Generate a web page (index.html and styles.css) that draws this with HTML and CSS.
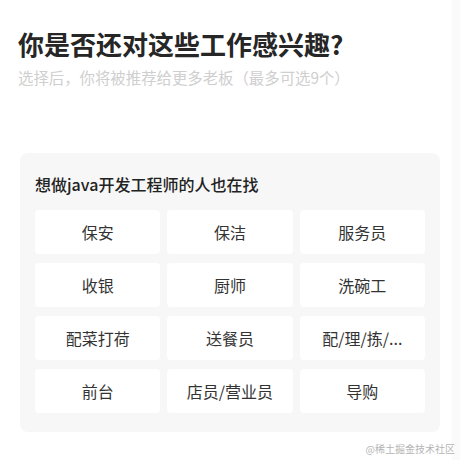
FILE: index.html
```html
<!DOCTYPE html>
<html lang="zh-CN">
  <head>
    <meta charset="UTF-8" />
    <meta name="viewport" content="width=device-width, initial-scale=1.0" />
    <title>感兴趣的工作</title>
    <link rel="stylesheet" href="styles.css">
  </head>
  <body>
    <div class="page">
      <h1 class="title">你是否还对这些工作感兴趣?</h1>
      <p class="subtitle">选择后，你将被推荐给更多老板（最多可选9个）</p>

      <div class="card">
        <h2 class="card-title">想做java开发工程师的人也在找</h2>
        <div class="jobs">
          <div class="job">保安</div>
          <div class="job">保洁</div>
          <div class="job">服务员</div>
          <div class="job">收银</div>
          <div class="job">厨师</div>
          <div class="job">洗碗工</div>
          <div class="job">配菜打荷</div>
          <div class="job">送餐员</div>
          <div class="job">配/理/拣/...</div>
          <div class="job">前台</div>
          <div class="job">店员/营业员</div>
          <div class="job">导购</div>
        </div>
      </div>

      <div class="mark">@稀土掘金技术社区</div>
    </div>
  </body>
</html>
```

FILE: styles.css
```css
body {
  margin: 0;
  font-family: "Noto Sans CJK SC", "Noto Sans", sans-serif;
  color: #222;
  /* faint strip down the right edge */
  background: linear-gradient(to right, #fff 452px, #fafafa 452px);
}

.page {
  width: 460px;
  height: 460px;
  box-sizing: border-box;
  padding: 26px 0 0;
}

.title {
  margin: 0 0 0 18px;
  font-size: 26px;
  line-height: 36px;
  font-weight: 700;
  color: #262626;
}

.subtitle {
  margin: 5px 0 0 18px;
  font-size: 15.4px;
  line-height: 20px;
  color: #cfcfcf;
}

.card {
  margin: 66px 20px 0 20px;
  padding: 20px 15px 19px;
  background: #f7f7f7;
  border-radius: 8px;
}

.card-title {
  margin: 0 0 15px;
  font-size: 16px;
  line-height: 22px;
  font-weight: 500;
  color: #222;
}

.jobs {
  display: grid;
  grid-template-columns: repeat(3, 1fr);
  gap: 9px 7px;
}

.job {
  height: 44px;
  display: flex;
  align-items: center;
  justify-content: center;
  background: #fff;
  border-radius: 4px;
  font-size: 16px;
  color: #333;
}

.mark {
  margin: 10px 5px 0 0;
  text-align: right;
  font-size: 10px;
  line-height: 14px;
  color: #b5b5b5;
}
```
